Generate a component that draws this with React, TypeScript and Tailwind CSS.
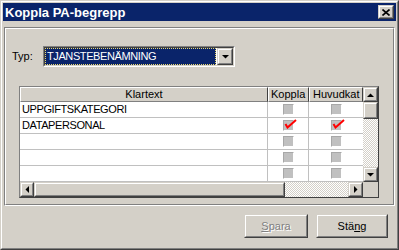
import React from "react";

const rows = [
  { text: "UPPGIFTSKATEGORI", koppla: false, huvud: false },
  { text: "DATAPERSONAL", koppla: true, huvud: true },
  { text: "", koppla: false, huvud: false },
  { text: "", koppla: false, huvud: false },
  { text: "", koppla: false, huvud: false },
];

function Raised({ className = "", children }: { className?: string; children?: React.ReactNode }) {
  return (
    <div className={`border border-t-[#d4d0c8] border-l-[#d4d0c8] border-r-[#404040] border-b-[#404040] ${className}`}>
      <div className="w-full h-full border border-t-white border-l-white border-r-[#808080] border-b-[#808080] bg-[#d4d0c8] flex items-center justify-center">
        {children}
      </div>
    </div>
  );
}

function Arrow({ dir }: { dir: "up" | "down" | "left" | "right" }) {
  const pts = {
    up: "0,4 7,4 3.5,0.5",
    down: "0,0 7,0 3.5,3.5",
    left: "4,0 4,7 0.5,3.5",
    right: "0,0 0,7 3.5,3.5",
  }[dir];
  const vertical = dir === "up" || dir === "down";
  return (
    <svg width={vertical ? 7 : 4} height={vertical ? 4 : 7} viewBox={vertical ? "0 0 7 4" : "0 0 4 7"}>
      <polygon points={pts} fill="#000" />
    </svg>
  );
}

function CheckBox({ checked }: { checked: boolean }) {
  return (
    <div className="relative w-[11px] h-[11px] bg-[#c0c0c0] border border-t-[#a8a8a8] border-l-[#a8a8a8] border-r-white border-b-white">
      {checked && (
        <svg className="absolute left-[0px] top-[-2px]" width="13" height="10" viewBox="0 0 13 10">
          <polyline points="1.5,5 3.5,8.5 12,1" fill="none" stroke="#ff0000" strokeWidth="2" />
        </svg>
      )}
    </div>
  );
}

export default function App() {
  return (
    <div className="w-[399px] h-[250px] font-['Liberation_Sans',Arial,sans-serif] text-black border border-t-[#d4d0c8] border-l-[#d4d0c8] border-r-[#404040] border-b-[#404040]">
      <div className="w-full h-full bg-[#d4d0c8] border border-t-white border-l-white border-r-[#808080] border-b-[#808080] p-[1px] flex flex-col">
        {/* title bar */}
        <div className="h-[18px] bg-[#0a246a] flex items-center justify-between pl-[2px] pr-[2px]">
          <span className="text-white font-bold text-[13px] leading-none">Koppla PA-begrepp</span>
          <Raised className="w-[16px] h-[14px]">
            <svg width="8" height="7" viewBox="0 0 8 7">
              <path d="M0.5 0.5 L7.5 6.5 M7.5 0.5 L0.5 6.5" stroke="#000" strokeWidth="1.6" />
            </svg>
          </Raised>
        </div>

        {/* group box */}
        <div className="mt-[6px] mx-[1px] h-[179px] border border-t-[#808080] border-l-[#808080] border-r-white border-b-white">
          <div className="h-full border border-t-white border-l-white border-r-[#808080] border-b-[#808080] pt-[17px] pl-[6px]">
            <div className="flex items-center h-[21px]">
              <span className="w-[31px] text-[11px]">Typ:</span>
              <div className="w-[192px] h-[21px] border border-t-[#808080] border-l-[#808080] border-r-white border-b-white">
                <div className="h-full border border-t-[#404040] border-l-[#404040] border-r-[#d4d0c8] border-b-[#d4d0c8] bg-white flex">
                  <div className="flex-1 mr-[1px] bg-[#0a246a] border border-dotted border-[#e8d870] text-white text-[11px] tracking-[-0.4px] leading-[15px] pl-[1px]">
                    TJANSTEBENÄMNING
                  </div>
                  <Raised className="w-[16px] h-[17px]">
                    <Arrow dir="down" />
                  </Raised>
                </div>
              </div>
            </div>

            {/* grid */}
            <div className="mt-[19px] ml-[7px] w-[360px] h-[112px] border border-t-[#808080] border-l-[#808080] border-r-[#404040] border-b-[#404040] bg-white flex flex-col text-[11px]">
              <div className="flex h-[95px]">
                <div className="w-[343px] flex flex-col overflow-hidden">
                  <div className="flex h-[15px] bg-[#d4d0c8] leading-[13px]">
                    <div className="w-[248px] border border-t-white border-l-white border-r-[#404040] border-b-[#808080] text-center">Klartext</div>
                    <div className="w-[41px] border border-t-white border-l-white border-r-[#404040] border-b-[#808080] pl-[2px]">Koppla</div>
                    <div className="w-[54px] border border-t-white border-l-white border-r-[#404040] border-b-[#808080] pl-[3px] whitespace-nowrap overflow-hidden">Huvudkat</div>
                  </div>
                  {rows.map((r, i) => (
                    <div key={i} className="flex h-[16px]">
                      <div className="w-[248px] border-r border-b border-[#c0c0c0] pl-[2px] leading-[15px] tracking-[-0.4px]">{r.text}</div>
                      <div className="w-[41px] border-r border-b border-[#c0c0c0] flex items-center justify-center">
                        <CheckBox checked={r.koppla} />
                      </div>
                      <div className="w-[54px] border-b border-[#c0c0c0] flex items-center justify-center">
                        <CheckBox checked={r.huvud} />
                      </div>
                    </div>
                  ))}
                </div>
                <div className="w-[15px] flex flex-col">
                  <Raised className="w-[15px] h-[15px]">
                    <Arrow dir="up" />
                  </Raised>
                  <Raised className="w-[15px] h-[17px]" />
                  <div className="flex-1 bg-[image:repeating-conic-gradient(#d4d0c8_0%_25%,#ffffff_0%_50%)] bg-[length:2px_2px]" />
                  <Raised className="w-[15px] h-[15px]">
                    <Arrow dir="down" />
                  </Raised>
                </div>
              </div>
              <div className="flex h-[15px]">
                <Raised className="w-[14px] h-[15px]">
                  <Arrow dir="left" />
                </Raised>
                <Raised className="w-[251px] h-[15px]" />
                <div className="w-[63px] bg-[image:repeating-conic-gradient(#d4d0c8_0%_25%,#ffffff_0%_50%)] bg-[length:2px_2px]" />
                <Raised className="w-[15px] h-[15px]">
                  <Arrow dir="right" />
                </Raised>
                <div className="w-[15px] bg-[#d4d0c8]" />
              </div>
            </div>
          </div>
        </div>

        {/* buttons */}
        <div className="mt-[8px] flex justify-end gap-[8px] pr-[8px] text-[11px]">
          <Raised className="w-[64px] h-[24px]">
            <span className="text-[#808080] [text-shadow:1px_1px_0_#ffffff]">
              <span className="underline">S</span>para
            </span>
          </Raised>
          <Raised className="w-[72px] h-[24px]">
            <span>
              Stä<span className="underline">n</span>g
            </span>
          </Raised>
        </div>
      </div>
    </div>
  );
}
